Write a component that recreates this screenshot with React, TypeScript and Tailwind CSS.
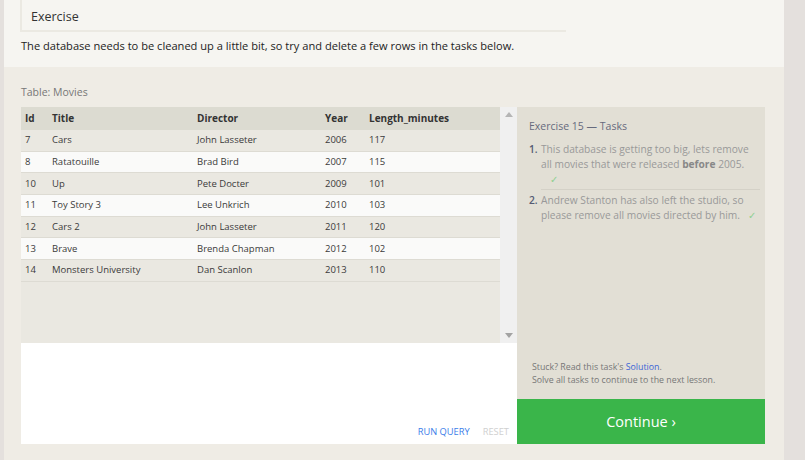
import React from "react";

const rows = [
  ["7", "Cars", "John Lasseter", "2006", "117"],
  ["8", "Ratatouille", "Brad Bird", "2007", "115"],
  ["10", "Up", "Pete Docter", "2009", "101"],
  ["11", "Toy Story 3", "Lee Unkrich", "2010", "103"],
  ["12", "Cars 2", "John Lasseter", "2011", "120"],
  ["13", "Brave", "Brenda Chapman", "2012", "102"],
  ["14", "Monsters University", "Dan Scanlon", "2013", "110"],
];

export default function App() {
  return (
    <div
      className="flex w-[805px] h-[460px] bg-[#e4e0dd] overflow-hidden"
      style={{ fontFamily: '"Open Sans", "Noto Sans", sans-serif' }}
    >
      <div className="w-[4px] shrink-0" />
      <div className="w-[780px] shrink-0 flex flex-col bg-[#efece5]">
        {/* Top section */}
        <div className="h-[67px] bg-[#f6f5f1] pl-[16px] flex flex-col">
          <div className="w-[546px] h-[32px] border-l-2 border-b-2 border-[#ebe9e2] pl-[9px] pt-[8px] text-[12.5px] leading-[18px] text-[#333]">
            Exercise
          </div>
          <div className="mt-[6px] pl-[1px] text-[11.1px] text-[#222]">
            The database needs to be cleaned up a little bit, so try and delete a few rows in the tasks below.
          </div>
        </div>
        {/* Table label */}
        <div className="h-[40px] pl-[17px] pt-[18px] text-[10.5px] text-[#777]">Table: Movies</div>
        <div className="flex pl-[17px]">
          {/* Left: table + editor */}
          <div className="w-[496px] flex flex-col">
            <div className="flex h-[236px] bg-[#eae8e1]">
              <div className="w-[479px] flex flex-col text-[9.5px] text-[#3a3a3a]">
                <div className="h-[23px] bg-[#dcdbd1] flex items-center font-bold text-[10px] text-[#333]">
                  <span className="w-[31px] pl-[4px]">Id</span>
                  <span className="w-[145px]">Title</span>
                  <span className="w-[128px]">Director</span>
                  <span className="w-[44px]">Year</span>
                  <span>Length_minutes</span>
                </div>
                {rows.map((r, i) => (
                  <div
                    key={r[0]}
                    className={`h-[21.7px] flex items-center border-b border-[#dddbd3] ${i % 2 === 1 ? "bg-[#fafaf9]" : "bg-[#eae8e1]"}`}
                  >
                    <span className="w-[31px] pl-[4px]">{r[0]}</span>
                    <span className="w-[145px]">{r[1]}</span>
                    <span className="w-[128px]">{r[2]}</span>
                    <span className="w-[44px]">{r[3]}</span>
                    <span>{r[4]}</span>
                  </div>
                ))}
              </div>
              <div className="w-[17px] bg-[#f0f0f0] flex flex-col items-center justify-between py-[5px]">
                <svg width="8" height="5" viewBox="0 0 8 5"><path d="M0 5 L4 0 L8 5 Z" fill="#b5b5b5" /></svg>
                <svg width="8" height="5" viewBox="0 0 8 5"><path d="M0 0 L4 5 L8 0 Z" fill="#a3a3a3" /></svg>
              </div>
            </div>
            <div className="h-[101px] bg-white flex items-end justify-end pb-[5px] pr-[8px] gap-[13px] text-[9.3px]">
              <span className="text-[#3b7de9]">RUN QUERY</span>
              <span className="text-[#d0d0d0]">RESET</span>
            </div>
          </div>
          {/* Right panel */}
          <div className="w-[248px] flex flex-col">
            <div className="h-[292px] bg-[#e2dfd5] flex flex-col pl-[12px] pr-[6px] pt-[12px]">
              <div className="text-[10.5px] text-[#666a7d]">Exercise 15 — Tasks</div>
              <div className="mt-[7px] flex text-[10.2px] leading-[15px] text-[#999]">
                <span className="w-[12px] text-[#555a73] font-semibold">1.</span>
                <div className="flex-1 pr-[4px]">
                  This database is getting too big, lets remove all movies that were released <b className="text-[#888]">before</b> 2005.
                  <div className="pl-[9px] text-[#90d090]">✓</div>
                </div>
              </div>
              <div className="ml-[12px] -mr-[1px] mt-[2px] border-t border-[#d4d1c7]" />
              <div className="mt-[3px] flex text-[10.2px] leading-[15px] text-[#999]">
                <span className="w-[12px] text-[#555a73] font-semibold">2.</span>
                <div className="flex-1">
                  Andrew Stanton has also left the studio, so please remove all movies directed by {"him. "}
                  <span className="ml-[5px] text-[#90d090]">✓</span>
                </div>
              </div>
              <div className="mt-auto pb-[12px] pl-[3px] text-[8.8px] leading-[13px] text-[#777]">
                <div>Stuck? Read this task's <span className="text-[#3b64d6]">Solution</span>.</div>
                <div>Solve all tasks to continue to the next lesson.</div>
              </div>
            </div>
            <div className="h-[45px] bg-[#3ab54a] flex items-center justify-center text-white text-[14.5px]">
              Continue ›
            </div>
          </div>
        </div>
      </div>
    </div>
  );
}
